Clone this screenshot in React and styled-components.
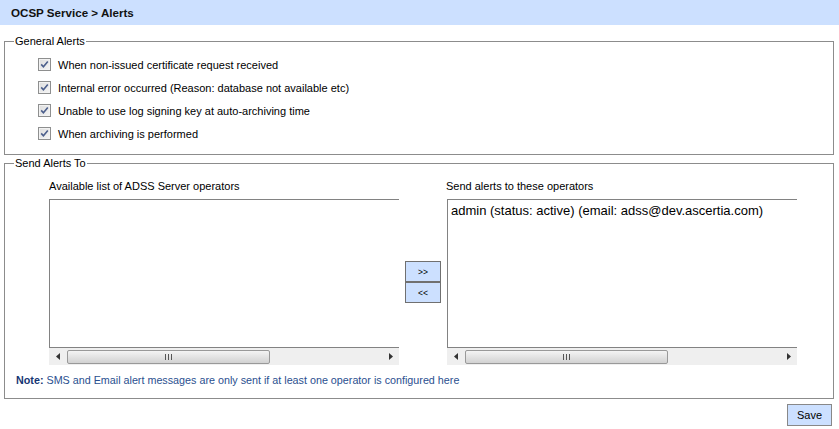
import React from "react";
import styled, { createGlobalStyle } from "styled-components";

const GlobalStyle = createGlobalStyle`
  body {
    margin: 0;
    background: #fff;
    font-family: "Liberation Sans", Arial, sans-serif;
    font-size: 11px;
    color: #000;
  }
`;

const Page = styled.div`
  width: 839px;
  height: 429px;
  overflow: hidden;
`;

const Header = styled.div`
  height: 25px;
  line-height: 25px;
  padding-left: 11px;
  background: #cce0ff;
  font-weight: bold;
  font-size: 11.6px;
  color: #111;
`;

const Body = styled.div`
  padding: 0 5px 0 4px;
`;

const Group = styled.fieldset`
  margin: ${(p) => p.$top}px 0 0 0;
  padding: 0;
  border: 1px solid #8c8c8c;
  min-width: 0;
`;

const Legend = styled.legend`
  margin-left: 9px;
  padding: 0 1px;
  font-size: 11px;
  line-height: 13px;
`;

const AlertList = styled.div`
  padding: 5px 0 9px 33px;
`;

const AlertRow = styled.label`
  display: flex;
  align-items: center;
  gap: 7px;
  height: 23px;
  font-size: 11px;
`;

const Box = styled.span`
  width: 11px;
  height: 11px;
  border: 1px solid #8e8f8f;
  background: linear-gradient(135deg, #dedede 0%, #f4f4f4 100%);
  display: flex;
  align-items: center;
  justify-content: center;
  box-shadow: inset 0 0 0 1px #f2f2f2;
`;

const Check = () => (
  <Box>
    <svg width="9" height="9" viewBox="0 0 9 9">
      <path d="M1.2 4.4 L3.4 6.8 L7.8 1.4" fill="none" stroke="#4c5f8c" strokeWidth="1.6" />
    </svg>
  </Box>
);

const Transfer = styled.div`
  display: grid;
  grid-template-columns: 350px 36px 350px;
  column-gap: 6px;
  row-gap: 6px;
  padding: 10px 0 0 44px;
  align-items: center;
`;

const ColLabel = styled.div`
  font-size: 11px;
  line-height: 13px;
  margin-left: ${(p) => p.$shift || 0}px;
`;

const ListWrap = styled.div`
  display: flex;
  flex-direction: column;
`;

const ListBox = styled.div`
  height: 149px;
  border: 1px solid #828282;
  border-right: none;
  background: #fff;
  padding: 3px 0 0 3px;
  box-sizing: border-box;
  font-family: Arial, "Liberation Sans", sans-serif;
  font-size: 13px;
  white-space: nowrap;
  overflow: hidden;
`;

const HScroll = styled.div`
  height: 17px;
  display: flex;
  align-items: center;
  background: #efefef;
`;

const ArrowBtn = styled.div`
  width: 17px;
  height: 17px;
  display: flex;
  align-items: center;
  justify-content: center;
`;

const Track = styled.div`
  flex: 1;
  display: flex;
  align-items: center;
`;

const Thumb = styled.div`
  width: 203px;
  height: 14px;
  margin-left: 1px;
  border: 1px solid #999;
  border-radius: 2px;
  box-sizing: border-box;
  background: linear-gradient(#f4f4f4, #e3e3e3 50%, #d2d2d2);
  display: flex;
  align-items: center;
  justify-content: center;
`;

const Scrollbar = () => (
  <HScroll>
    <ArrowBtn>
      <svg width="4" height="7" viewBox="0 0 4 7">
        <path d="M4 0 L0 3.5 L4 7 Z" fill="#333" />
      </svg>
    </ArrowBtn>
    <Track>
      <Thumb>
        <svg width="7" height="6" viewBox="0 0 7 6">
          <rect x="0" y="0" width="1" height="6" fill="#555" />
          <rect x="3" y="0" width="1" height="6" fill="#555" />
          <rect x="6" y="0" width="1" height="6" fill="#555" />
        </svg>
      </Thumb>
    </Track>
    <ArrowBtn>
      <svg width="4" height="7" viewBox="0 0 4 7">
        <path d="M0 0 L4 3.5 L0 7 Z" fill="#333" />
      </svg>
    </ArrowBtn>
  </HScroll>
);

const MoveButtons = styled.div`
  display: flex;
  flex-direction: column;
`;

const MoveBtn = styled.button`
  width: 36px;
  height: 21px;
  margin: 0;
  padding: 0;
  border: 1px solid #707070;
  background: #cce0ff;
  font-family: "Liberation Sans", Arial, sans-serif;
  font-size: 8.5px;
  color: #000;
`;

const Note = styled.div`
  padding: 9px 0 11px 11px;
  font-size: 10.75px;
  line-height: 13px;
  color: #2a4f8f;
  b {
    color: #163673;
  }
`;

const Footer = styled.div`
  display: flex;
  justify-content: flex-end;
  padding: 5px 2px 0 0;
`;

const SaveBtn = styled.button`
  width: 45px;
  height: 22px;
  border: 1px solid #888;
  background: #cce0ff;
  font-family: "Liberation Sans", Arial, sans-serif;
  font-size: 11px;
  color: #000;
  padding: 0;
`;

const alerts = [
  "When non-issued certificate request received",
  "Internal error occurred (Reason: database not available etc)",
  "Unable to use log signing key at auto-archiving time",
  "When archiving is performed",
];

export default function App() {
  return (
    <Page>
      <GlobalStyle />
      <Header>OCSP Service &gt; Alerts</Header>
      <Body>
        <Group $top={10}>
          <Legend>General Alerts</Legend>
          <AlertList>
            {alerts.map((a) => (
              <AlertRow key={a}>
                <Check />
                {a}
              </AlertRow>
            ))}
          </AlertList>
        </Group>
        <Group $top={2}>
          <Legend>Send Alerts To</Legend>
          <Transfer>
            <ColLabel>Available list of ADSS Server operators</ColLabel>
            <div />
            <ColLabel $shift={-1}>Send alerts to these operators</ColLabel>
            <ListWrap>
              <ListBox />
              <Scrollbar />
            </ListWrap>
            <MoveButtons>
              <MoveBtn>&gt;&gt;</MoveBtn>
              <MoveBtn>&lt;&lt;</MoveBtn>
            </MoveButtons>
            <ListWrap>
              <ListBox>admin (status: active) (email: adss@dev.ascertia.com)</ListBox>
              <Scrollbar />
            </ListWrap>
          </Transfer>
          <Note>
            <b>Note:</b> SMS and Email alert messages are only sent if at least one operator is configured here
          </Note>
        </Group>
        <Footer>
          <SaveBtn>Save</SaveBtn>
        </Footer>
      </Body>
    </Page>
  );
}
